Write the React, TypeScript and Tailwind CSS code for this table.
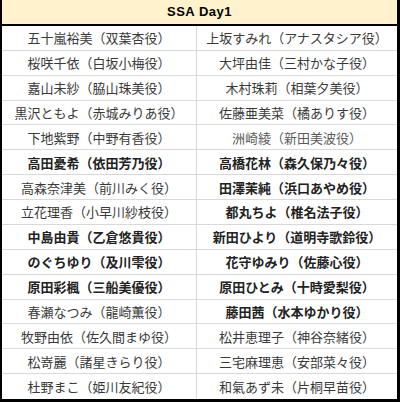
import clsx from "clsx";

type Cell = { text: string; bold?: boolean; muted?: boolean };

// SSA Day1 cast list, left / right column
const rows: [Cell, Cell][] = [
    [{ text: "五十嵐裕美（双葉杏役）" }, { text: "上坂すみれ（アナスタシア役）" }],
    [{ text: "桜咲千依（白坂小梅役）" }, { text: "大坪由佳（三村かな子役）" }],
    [{ text: "嘉山未紗（脇山珠美役）" }, { text: "木村珠莉（相葉夕美役）" }],
    [{ text: "黒沢ともよ（赤城みりあ役）" }, { text: "佐藤亜美菜（橘ありす役）" }],
    [{ text: "下地紫野（中野有香役）" }, { text: "洲崎綾（新田美波役）", muted: true }],
    [{ text: "高田憂希（依田芳乃役）", bold: true }, { text: "高橋花林（森久保乃々役）", bold: true }],
    [{ text: "高森奈津美（前川みく役）" }, { text: "田澤茉純（浜口あやめ役）", bold: true }],
    [{ text: "立花理香（小早川紗枝役）" }, { text: "都丸ちよ（椎名法子役）", bold: true }],
    [{ text: "中島由貴（乙倉悠貴役）", bold: true }, { text: "新田ひより（道明寺歌鈴役）", bold: true }],
    [{ text: "のぐちゆり（及川雫役）", bold: true }, { text: "花守ゆみり（佐藤心役）", bold: true }],
    [{ text: "原田彩楓（三船美優役）", bold: true }, { text: "原田ひとみ（十時愛梨役）", bold: true }],
    [{ text: "春瀬なつみ（龍崎薫役）" }, { text: "藤田茜（水本ゆかり役）", bold: true }],
    [{ text: "牧野由依（佐久間まゆ役）" }, { text: "松井恵理子（神谷奈緒役）" }],
    [{ text: "松嵜麗（諸星きらり役）" }, { text: "三宅麻理恵（安部菜々役）" }],
    [{ text: "杜野まこ（姫川友紀役）" }, { text: "和氣あず未（片桐早苗役）" }],
];

function CastCell({ cell, left, last }: { cell: Cell; left: boolean; last: boolean }) {
    return (
        <div
            className={clsx(
                "flex items-center justify-center text-[13px] leading-none whitespace-nowrap",
                !last && "border-b border-[#d9d9d9]",
                left && "border-r border-[#d9d9d9]",
                cell.bold ? "font-bold text-[#222]" : cell.muted ? "text-[#5a5a5a]" : "text-[#3a3a3a]"
            )}
        >
            {cell.text}
        </div>
    );
}

export default function App() {
    return (
        <div
            className="flex h-[402px] w-[400px] flex-col border-b-[3px] border-l-2 border-r-[3px] border-black bg-white"
            style={{ fontFamily: '"Noto Sans CJK JP", "Noto Sans", sans-serif' }}
        >
            <div className="flex h-[26px] shrink-0 items-center justify-center border-b-2 border-black bg-[#fff2cc]">
                <span className="font-['Liberation_Sans',Arial,sans-serif] text-[13px] font-bold tracking-[0.5px] text-black">
                    SSA Day1
                </span>
            </div>
            <div className="grid flex-1 grid-cols-[195px_1fr] grid-rows-15">
                {rows.map(([l, r], i) => (
                    <div key={i} className="contents">
                        <CastCell cell={l} left last={i === rows.length - 1} />
                        <CastCell cell={r} left={false} last={i === rows.length - 1} />
                    </div>
                ))}
            </div>
        </div>
    );
}
